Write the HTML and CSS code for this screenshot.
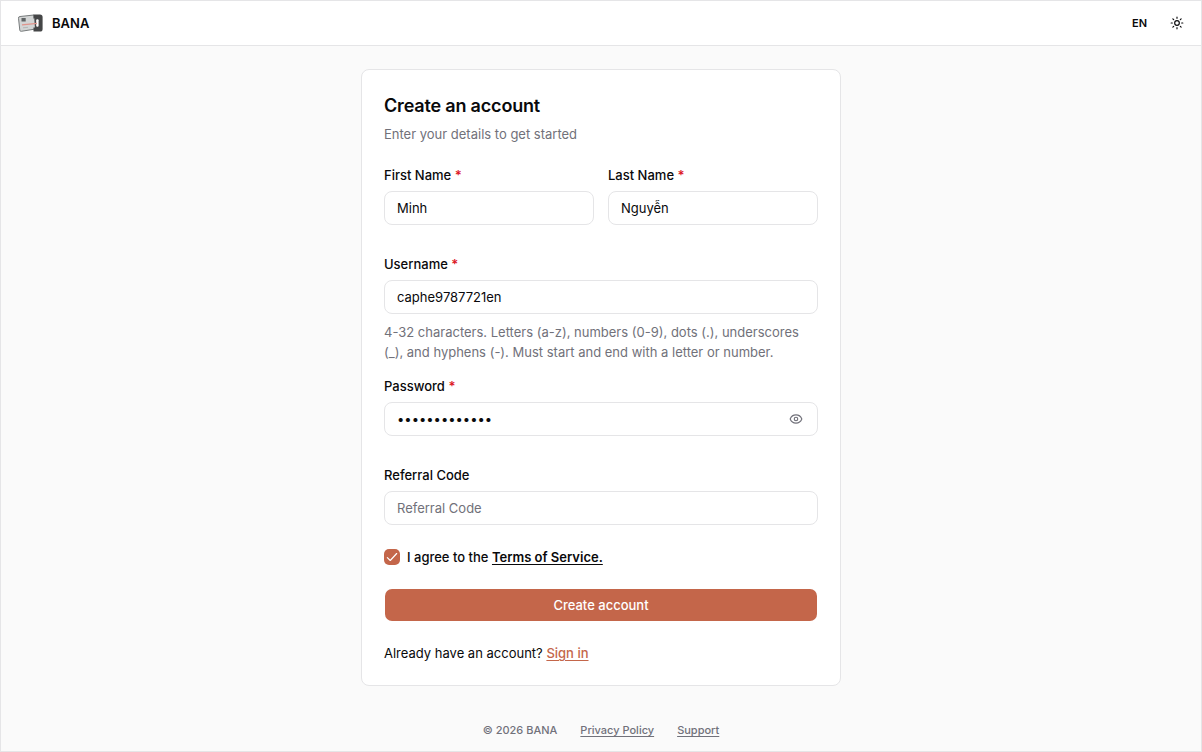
FILE: index.html
```html
<!DOCTYPE html>
<html lang="en">

<head>
    <meta charset="UTF-8" />
    <meta name="viewport" content="width=device-width, initial-scale=1" />
    <title>BANA | Create an account</title>

    <link rel="stylesheet" href="styles.css">
</head>

<body>

    <header class="topbar">
        <a href="#" class="brand">
            <svg class="logo" width="28" height="20" viewBox="0 0 28 20" aria-hidden="true">
                <path d="M3 3.500 17 2l1.500 14-14.200 2.300a1.300 1.300 0 0 1-1.500-1.100L1.500 5.300A1.600 1.600 0 0 1 3 3.500z" fill="#d3d5d5" stroke="#777b7c" />
                <path d="M16.500 1.500h6.500a2.600 2.600 0 0 1 2.600 2.600v11.800a2.600 2.600 0 0 1-2.600 2.600h-6.500v-4h1.500V5.500h-1.500z" fill="#454647" />
                <rect x="4.500" y="5" width="4.200" height="3.500" fill="#606465" />
                <rect x="19.200" y="6.200" width="2.400" height="7.600" rx="1" fill="#fff" />
                <path d="M5 11.800 20 10.300" stroke="#e0948c" stroke-width="1.200" />
                <path d="m6 14.800 5-.5" stroke="#b4b7b7" />
            </svg>
            <span>BANA</span>
        </a>

        <div class="topbar-actions">
            <button type="button" class="lang-btn">EN</button>
            <button type="button" class="icon-btn" aria-label="Toggle theme">
                <svg width="14" height="14" viewBox="0 0 24 24" fill="none" stroke="currentColor" stroke-width="2" stroke-linecap="round" stroke-linejoin="round">
                    <circle cx="12" cy="12" r="4" />
                    <path d="M12 2v2M12 20v2M4.9 4.9l1.4 1.4M17.7 17.7l1.4 1.4M2 12h2M20 12h2M6.3 17.7l-1.4 1.4M19.1 4.9l-1.4 1.4" />
                </svg>
            </button>
        </div>
    </header>

    <main class="content">
        <section class="card">
            <h1>Create an account</h1>
            <p class="subtitle">Enter your details to get started</p>

            <form>
                <div class="name-row">
                    <div class="field">
                        <label for="firstName">First Name <span class="required">*</span></label>
                        <input type="text" id="firstName" value="Minh">
                    </div>
                    <div class="field">
                        <label for="lastName">Last Name <span class="required">*</span></label>
                        <input type="text" id="lastName" value="Nguyễn">
                    </div>
                </div>

                <div class="field has-hint">
                    <label for="username">Username <span class="required">*</span></label>
                    <input type="text" id="username" value="caphe9787721en" spellcheck="false">
                    <p class="hint">4-32 characters. Letters (a-z), numbers (0-9), dots (.), underscores (_), and hyphens (-). Must start and end with a letter or number.</p>
                </div>

                <div class="field">
                    <label for="password">Password <span class="required">*</span></label>
                    <div class="password-box">
                        <input type="password" id="password" value="caphe12345678">
                        <button type="button" class="eye-btn" aria-label="Show password">
                            <svg width="14" height="14" viewBox="0 0 24 24" fill="none" stroke="currentColor" stroke-width="2" stroke-linecap="round" stroke-linejoin="round">
                                <path d="M2 12c2-5 6-7 10-7s8 2 10 7c-2 5-6 7-10 7s-8-2-10-7z" />
                                <circle cx="12" cy="12" r="3" />
                            </svg>
                        </button>
                    </div>
                </div>

                <div class="field referral">
                    <label for="referral">Referral Code</label>
                    <input type="text" id="referral" placeholder="Referral Code">
                </div>

                <div class="agree">
                    <span class="check">
                        <input type="checkbox" id="agree" checked>
                        <svg width="14" height="14" viewBox="0 0 24 24" fill="none" stroke="currentColor" stroke-width="2" stroke-linecap="round" stroke-linejoin="round" aria-hidden="true">
                            <path d="M4 13l5 5L20 6" />
                        </svg>
                    </span>
                    <label for="agree">I agree to the <a href="#">Terms of Service.</a></label>
                </div>

                <button type="submit" class="submit-btn">Create account</button>
            </form>

            <p class="signin">Already have an account? <a href="#">Sign in</a></p>
        </section>
    </main>

    <footer>
        <span>© 2026 BANA</span>
        <a href="#">Privacy Policy</a>
        <a href="#">Support</a>
    </footer>

</body>

</html>
```
FILE: styles.css
```css
:root {
    --primary: #c4664a;
    --border: #e5e5e7;
    --text: #09090b;
    --muted: #71717a;
    --page-bg: #fafafa;
    --red: #dc1626;
}

* {
    box-sizing: border-box;
}

body {
    margin: 0;
    min-height: 100vh;
    display: flex;
    flex-direction: column;
    border: 1px solid var(--border);
    font-family: Inter, sans-serif;
    font-size: 13px;
    line-height: 20px;
    background: var(--page-bg);
    color: var(--text);
}

h1,
p {
    margin: 0;
}

button,
input {
    font: inherit;
    color: inherit;
}

button {
    padding: 0;
    border: none;
    background: none;
    cursor: pointer;
}

.topbar {
    display: flex;
    justify-content: space-between;
    align-items: center;
    height: 45px;
    padding: 0 16px;
    background: #fff;
    border-bottom: 1px solid var(--border);
}

.brand {
    display: flex;
    align-items: center;
    gap: 7px;
    color: inherit;
    font-weight: 600;
    text-decoration: none;
}

.topbar-actions {
    display: flex;
    align-items: center;
    gap: 22px;
}

.lang-btn {
    font-size: 11px;
    font-weight: 600;
}

.icon-btn {
    display: flex;
    width: 16px;
    justify-content: center;
}

.content {
    flex: 1;
    padding: 23px 16px 0;
}

.card {
    max-width: 480px;
    margin: 0 auto;
    padding: 22px;
    background: #fff;
    border: 1px solid var(--border);
    border-radius: 8px;
}

h1 {
    font-size: 18px;
    line-height: 28px;
    font-weight: 600;
    letter-spacing: -0.01em;
}

.subtitle {
    margin: 4px 0 21px;
    color: var(--muted);
}

.name-row {
    display: grid;
    grid-template-columns: 1fr 1fr;
    gap: 14px;
}

.field {
    display: flex;
    flex-direction: column;
    gap: 6px;
    margin-bottom: 29px;
}

.field.has-hint {
    margin-bottom: 14px;
}

.field.referral {
    margin-bottom: 24px;
}

.field label,
.agree label {
    font-weight: 500;
}

.required {
    color: var(--red);
    font-weight: 600;
}

.field input {
    width: 100%;
    height: 34px;
    padding: 0 12px;
    border: 1px solid var(--border);
    border-radius: 8px;
    background: #fff;
}

.field input::placeholder {
    color: var(--muted);
}

.hint {
    margin-top: 2px;
    color: var(--muted);
}

.password-box {
    position: relative;
}

.eye-btn {
    position: absolute;
    top: 0;
    right: 15px;
    display: flex;
    align-items: center;
    height: 34px;
    color: var(--muted);
}

.agree {
    display: flex;
    align-items: center;
    gap: 7px;
    height: 16px;
    margin-bottom: 23px;
}

.check {
    position: relative;
    width: 16px;
    height: 16px;
}

.check input {
    appearance: none;
    display: block;
    width: 16px;
    height: 16px;
    margin: 0;
    border-radius: 5px;
}

.check input:checked {
    background: var(--primary);
}

.check svg {
    position: absolute;
    top: 1px;
    left: 1px;
    color: #fff;
    pointer-events: none;
}

.agree a {
    color: inherit;
    font-weight: 600;
    text-underline-offset: 2px;
}

.submit-btn {
    display: block;
    width: 100%;
    height: 34px;
    border: 1px solid transparent;
    border-radius: 8px;
    background: var(--primary);
    background-clip: padding-box;
    color: #fff;
    font-weight: 500;
}

.signin {
    margin-top: 21px;
}

.signin a {
    color: var(--primary);
    font-weight: 500;
    text-underline-offset: 2px;
}

footer {
    display: flex;
    justify-content: center;
    gap: 23px;
    padding: 36px 16px 13px;
    font-size: 11px;
    line-height: 16px;
    font-weight: 500;
    color: var(--muted);
}

footer a {
    color: inherit;
    text-underline-offset: 2px;
}
```
